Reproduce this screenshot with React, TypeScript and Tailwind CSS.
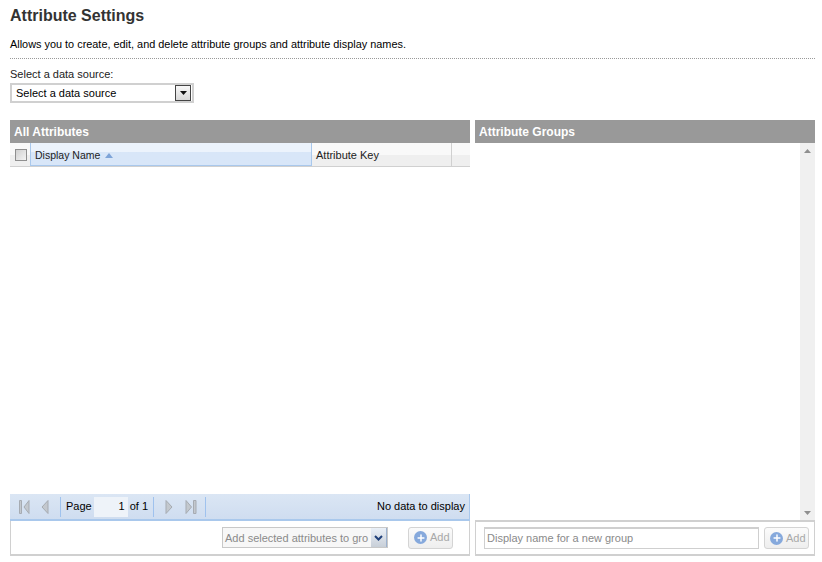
import { Plus } from "lucide-react";

function PagerIcon({ d, className }: { d: string; className?: string }) {
  return (
    <svg width="12" height="14" viewBox="0 0 12 14" className={className}>
      <path d={d} fill="#c3c8ce" stroke="#a6abb2" strokeWidth="1" />
    </svg>
  );
}

function Sep() {
  return <div className="h-[20px] w-px bg-[#9fc2ee]" />;
}

function AddButton() {
  return (
    <div className="flex h-[22px] w-[45px] shrink-0 items-center gap-[3px] rounded-[3px] border border-[#d4d4d4] bg-gradient-to-b from-[#fbfbfb] to-[#eeeeee] pl-[5px] text-[11px] text-[#a8a8a8]">
      <span className="flex h-[13px] w-[13px] items-center justify-center rounded-full bg-[#86a9dc]">
        <Plus size={10} strokeWidth={3.5} color="#ffffff" />
      </span>
      Add
    </div>
  );
}

export default function App() {
  return (
    <div className="flex h-[562px] w-[822px] flex-col overflow-hidden bg-white px-[10px] pr-[7px] font-['Liberation_Sans',Arial,sans-serif] text-[11px] text-[#222]">
      <h1 className="mt-[6px] h-[20px] text-[16px] leading-[20px] font-bold text-[#333]">Attribute Settings</h1>
      <p className="mt-[11px] h-[14px] text-[10.9px] leading-[14px] text-black">
        Allows you to create, edit, and delete attribute groups and attribute display names.
      </p>
      <div className="mt-[7px] border-t border-dotted border-[#999]" />
      <div className="mt-[8px] h-[14px] text-[11px] leading-[14px]">Select a data source:</div>
      <div className="mt-[2px] flex h-[20px] w-[184px] items-center justify-between border-2 border-[#d0d0d0] bg-white pr-[1px] pl-[4px] text-[11px] text-black">
        <span>Select a data source</span>
        <span className="flex h-[16px] w-[16px] items-center justify-center border border-[#444] bg-gradient-to-b from-[#f8f8f8] to-[#d8d8d8]">
          <svg width="7" height="4" viewBox="0 0 7 4"><path d="M0 0h7L3.5 4z" fill="#111" /></svg>
        </span>
      </div>

      <div className="mt-[17px] flex h-[436px] gap-[5px]">
        <section className="flex w-[460px] flex-col">
          <div className="flex h-[23px] items-center bg-[#999999] pl-[4px] text-[12px] font-bold text-white">All Attributes</div>
          <div className="flex h-[24px] border-b border-[#d0d0d0] bg-gradient-to-b from-[#f9f9f9] from-50% to-[#efefef] to-50%">
            <div className="flex w-[20px] items-center justify-center pl-[1px]">
              <div className="h-[12px] w-[12px] border border-[#8f8f8f] bg-gradient-to-br from-[#d0d0d0] to-[#f4f4f4]" />
            </div>
            <div className="flex w-[282px] items-center gap-[5px] border-x border-b border-[#a9c8ec] bg-gradient-to-b from-[#ecf3fc] from-40% to-[#d8e6f8] to-40% pt-[3px] pl-[4px] text-[10.5px]">
              Display Name
              <svg width="8" height="5" viewBox="0 0 8 5"><path d="M0 5L4 0l4 5z" fill="#7ea4d8" /></svg>
            </div>
            <div className="flex w-[140px] items-center border-r border-[#d0d0d0] pt-[2px] pl-[4px] text-[11px]">Attribute Key</div>
          </div>
          <div className="flex-1" />
          <div className="flex h-[27px] items-center border-r border-b-2 border-r-[#a9c8ec] border-b-[#a9c8ec] bg-gradient-to-b from-[#dbe6f4] to-[#cfddf0] pr-[4px] pl-[8px] text-[11px] text-black">
            <PagerIcon d="M1.5 0.5h2v13h-2zM11 0.5v13L6 7z" />
            <PagerIcon d="M8 0.5v13L2 7z" className="ml-[10px]" />
            <span className="ml-[8px]"><Sep /></span>
            <span className="ml-[5px]">Page</span>
            <div className="ml-[2px] flex h-[20px] w-[34px] items-center justify-end bg-[#eef3f9] pr-[3px] text-[11px]">1</div>
            <span className="ml-[2px]">of 1</span>
            <span className="ml-[5px]"><Sep /></span>
            <PagerIcon d="M2 0.5v13L8 7z" className="ml-[10px]" />
            <PagerIcon d="M1 0.5v13L6.5 7zM8.5 0.5h2.5v13h-2.5z" className="ml-[9px]" />
            <span className="ml-[8px]"><Sep /></span>
            <span className="ml-auto">No data to display</span>
          </div>
          <div className="flex h-[35px] items-center justify-end border-x-[1.5px] border-b-2 border-[#d0d0d0] pr-[16px]">
            <div className="mr-[20px] flex h-[21px] w-[166px] items-stretch border border-[#c8c8c8] bg-[#f7f7f7] text-[11px] text-[#8a8a8a]">
              <span className="w-[146px] overflow-hidden pl-[2px] leading-[20px] whitespace-nowrap">Add selected attributes to gro</span>
              <span className="ml-auto flex w-[16px] shrink-0 items-center justify-center border-r border-[#9db2cf] bg-gradient-to-b from-[#eaf0f8] to-[#c8cfd8]">
                <svg width="9" height="6" viewBox="0 0 9 6"><path d="M1 1l3.5 3.5L8 1" fill="none" stroke="#20407a" strokeWidth="2" /></svg>
              </span>
            </div>
            <AddButton />
          </div>
        </section>

        <section className="flex w-[340px] flex-col">
          <div className="flex h-[23px] items-center bg-[#999999] pl-[4px] text-[12px] font-bold text-white">Attribute Groups</div>
          <div className="flex flex-1 justify-end">
            <div className="flex w-[15px] flex-col items-center justify-between bg-[#f0f0f0] pt-[6px] pb-[5px]">
              <svg width="7" height="4" viewBox="0 0 7 4"><path d="M0 4L3.5 0 7 4z" fill="#8f8f8f" /></svg>
              <svg width="7" height="4" viewBox="0 0 7 4"><path d="M0 0h7L3.5 4z" fill="#8f8f8f" /></svg>
            </div>
          </div>
          <div className="flex h-[36px] items-center gap-[5px] border-x-[1.5px] border-y-2 border-[#d0d0d0] pl-[8px]">
            <div className="flex h-[22px] w-[275px] items-center border border-t-2 border-[#cfcfcf] bg-white pl-[2px] text-[11px] text-[#8a8a8a]">Display name for a new group</div>
            <AddButton />
          </div>
        </section>
      </div>
    </div>
  );
}
